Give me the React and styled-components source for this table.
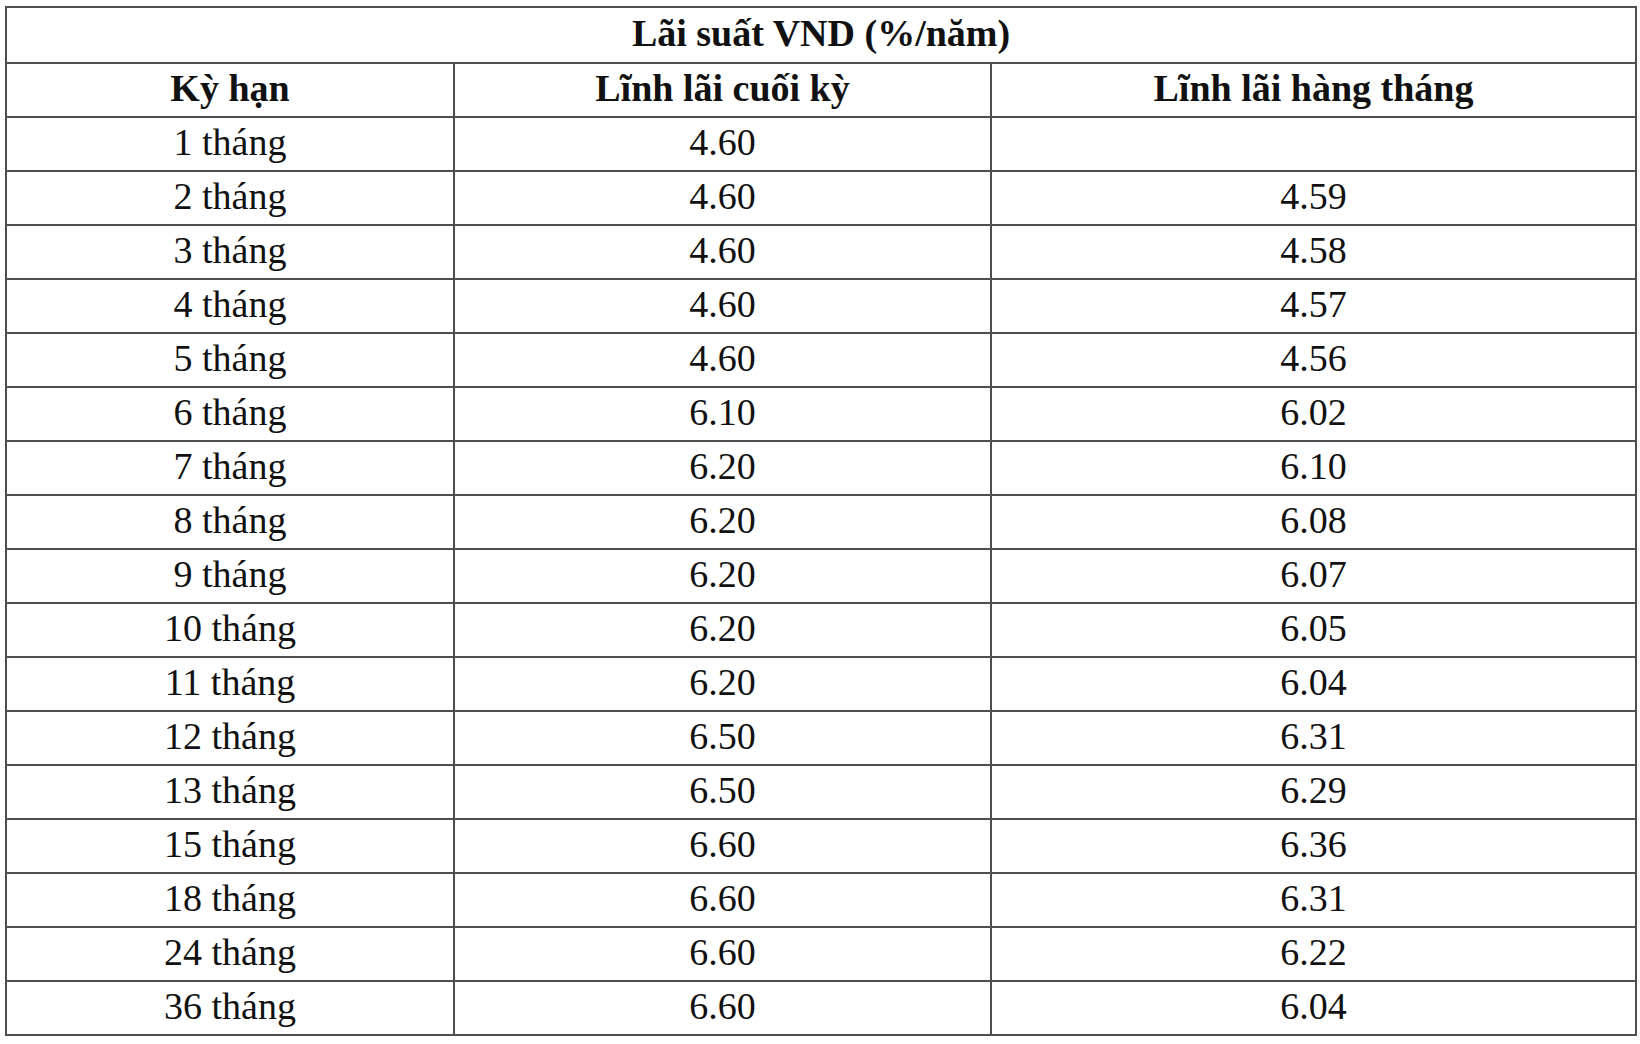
import React from "react";
import styled, { createGlobalStyle } from "styled-components";

const GlobalStyle = createGlobalStyle`
    html, body {
        margin: 0;
        padding: 0;
        background: #ffffff;
    }
`

const Page = styled.div`
    padding: 6px 5px 0 5px;
    font-family: "Liberation Serif", "Times New Roman", serif;
    color: #111;
`

const RateTable = styled.table`
    width: 1630px;
    border-collapse: collapse;
    table-layout: fixed;

    td, th{
        border: 2px solid #4e4e4e;
        text-align: center;
        vertical-align: middle;
        padding: 0 0 5px 0;
        font-size: 38px;
        line-height: 1;
    }
    th{
        font-weight: bold;
    }
`

const Col = styled.col`
    width: ${(p) => p.$w}px;
`

const TitleRow = styled.tr`
    height: 56px;
`

const Row = styled.tr`
    height: 54px;
`

const rates = [
    ["1 tháng", "4.60", ""],
    ["2 tháng", "4.60", "4.59"],
    ["3 tháng", "4.60", "4.58"],
    ["4 tháng", "4.60", "4.57"],
    ["5 tháng", "4.60", "4.56"],
    ["6 tháng", "6.10", "6.02"],
    ["7 tháng", "6.20", "6.10"],
    ["8 tháng", "6.20", "6.08"],
    ["9 tháng", "6.20", "6.07"],
    ["10 tháng", "6.20", "6.05"],
    ["11 tháng", "6.20", "6.04"],
    ["12 tháng", "6.50", "6.31"],
    ["13 tháng", "6.50", "6.29"],
    ["15 tháng", "6.60", "6.36"],
    ["18 tháng", "6.60", "6.31"],
    ["24 tháng", "6.60", "6.22"],
    ["36 tháng", "6.60", "6.04"],
]

const App = () => {
    return (
        <Page>
            <GlobalStyle />
            <RateTable>
                <colgroup>
                    <Col $w={448} />
                    <Col $w={537} />
                    <Col $w={645} />
                </colgroup>
                <thead>
                    <TitleRow>
                        <th colSpan={3}>Lãi suất VND (%/năm)</th>
                    </TitleRow>
                    <Row>
                        <th>Kỳ hạn</th>
                        <th>Lĩnh lãi cuối kỳ</th>
                        <th>Lĩnh lãi hàng tháng</th>
                    </Row>
                </thead>
                <tbody>
                    {rates.map((r) => (
                        <Row key={r[0]}>
                            <td>{r[0]}</td>
                            <td>{r[1]}</td>
                            <td>{r[2]}</td>
                        </Row>
                    ))}
                </tbody>
            </RateTable>
        </Page>
    )
}

export default App;
